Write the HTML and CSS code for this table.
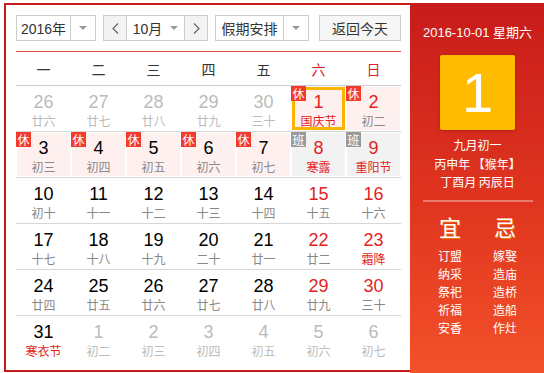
FILE: index.html
```html
<!DOCTYPE html>
<html>
<head>
<meta charset="utf-8">
<link rel="stylesheet" href="styles.css">
</head>
<body>
<div class="widget">
  <div class="main">
    <div class="controls">
      <div class="sel sel-year"><span class="sel-text">2016年</span><span class="sel-arrow"><i class="tri"></i></span></div>
      <div class="month-group">
        <span class="nav-btn"><svg width="7" height="11" viewBox="0 0 7 11"><polyline points="6,0.5 1,5.5 6,10.5" fill="none" stroke="#666" stroke-width="1.2"/></svg></span>
        <span class="month-sel">10月<i class="tri"></i></span>
        <span class="nav-btn"><svg width="7" height="11" viewBox="0 0 7 11"><polyline points="1,0.5 6,5.5 1,10.5" fill="none" stroke="#666" stroke-width="1.2"/></svg></span>
      </div>
      <div class="sel sel-holiday"><span class="sel-text">假期安排</span><span class="sel-arrow"><i class="tri"></i></span></div>
      <div class="btn-today">返回今天</div>
    </div>
    <div class="cal">
      <div class="weekdays">
        <span>一</span><span>二</span><span>三</span><span>四</span><span>五</span><span class="red">六</span><span class="red">日</span>
      </div>
      <div class="week">
        <div class="day other"><b>26</b><em>廿六</em></div>
        <div class="day other"><b>27</b><em>廿七</em></div>
        <div class="day other"><b>28</b><em>廿八</em></div>
        <div class="day other"><b>29</b><em>廿九</em></div>
        <div class="day other"><b>30</b><em>三十</em></div>
        <div class="day rest selected wknd"><span class="badge">休</span><b>1</b><em class="fest">国庆节</em></div>
        <div class="day rest wknd"><span class="badge">休</span><b>2</b><em>初二</em></div>
      </div>
      <div class="week">
        <div class="day rest"><span class="badge">休</span><b>3</b><em>初三</em></div>
        <div class="day rest"><span class="badge">休</span><b>4</b><em>初四</em></div>
        <div class="day rest"><span class="badge">休</span><b>5</b><em>初五</em></div>
        <div class="day rest"><span class="badge">休</span><b>6</b><em>初六</em></div>
        <div class="day rest"><span class="badge">休</span><b>7</b><em>初七</em></div>
        <div class="day work wknd"><span class="badge grey">班</span><b>8</b><em class="fest">寒露</em></div>
        <div class="day work wknd"><span class="badge grey">班</span><b>9</b><em class="fest">重阳节</em></div>
      </div>
      <div class="week">
        <div class="day"><b>10</b><em>初十</em></div>
        <div class="day"><b>11</b><em>十一</em></div>
        <div class="day"><b>12</b><em>十二</em></div>
        <div class="day"><b>13</b><em>十三</em></div>
        <div class="day"><b>14</b><em>十四</em></div>
        <div class="day wknd"><b>15</b><em>十五</em></div>
        <div class="day wknd"><b>16</b><em>十六</em></div>
      </div>
      <div class="week">
        <div class="day"><b>17</b><em>十七</em></div>
        <div class="day"><b>18</b><em>十八</em></div>
        <div class="day"><b>19</b><em>十九</em></div>
        <div class="day"><b>20</b><em>二十</em></div>
        <div class="day"><b>21</b><em>廿一</em></div>
        <div class="day wknd"><b>22</b><em>廿二</em></div>
        <div class="day wknd"><b>23</b><em class="fest">霜降</em></div>
      </div>
      <div class="week">
        <div class="day"><b>24</b><em>廿四</em></div>
        <div class="day"><b>25</b><em>廿五</em></div>
        <div class="day"><b>26</b><em>廿六</em></div>
        <div class="day"><b>27</b><em>廿七</em></div>
        <div class="day"><b>28</b><em>廿八</em></div>
        <div class="day wknd"><b>29</b><em>廿九</em></div>
        <div class="day wknd"><b>30</b><em>三十</em></div>
      </div>
      <div class="week">
        <div class="day"><b>31</b><em class="fest">寒衣节</em></div>
        <div class="day other"><b>1</b><em>初二</em></div>
        <div class="day other"><b>2</b><em>初三</em></div>
        <div class="day other"><b>3</b><em>初四</em></div>
        <div class="day other"><b>4</b><em>初五</em></div>
        <div class="day other"><b>5</b><em>初六</em></div>
        <div class="day other"><b>6</b><em>初七</em></div>
      </div>
    </div>
  </div>
  <div class="panel">
    <div class="p-date">2016-10-01 星期六</div>
    <div class="p-big">1</div>
    <div class="p-lunar">九月初一</div>
    <div class="p-lunar">丙申年 【猴年】</div>
    <div class="p-lunar">丁酉月 丙辰日</div>
    <div class="p-sep"></div>
    <div class="yiji">
      <div class="yj-col">
        <div class="yj-title">宜</div>
        <div class="yj-item">订盟</div>
        <div class="yj-item">纳采</div>
        <div class="yj-item">祭祀</div>
        <div class="yj-item">祈福</div>
        <div class="yj-item">安香</div>
      </div>
      <div class="yj-col">
        <div class="yj-title">忌</div>
        <div class="yj-item">嫁娶</div>
        <div class="yj-item">造庙</div>
        <div class="yj-item">造桥</div>
        <div class="yj-item">造船</div>
        <div class="yj-item">作灶</div>
      </div>
    </div>
  </div>
</div>
</body>
</html>
```
FILE: styles.css
```css
* { box-sizing: border-box; margin: 0; padding: 0; }
html, body { width: 544px; height: 373px; overflow: hidden; background: #fff; }
body {
  font-family: "Liberation Sans", "Noto Sans CJK SC", sans-serif;
  color: #333;
}
.widget {
  position: relative;
  margin: 3px 0 0 4px;
  width: 543px;
  height: 369px;
  border: 2px solid #c81b1b;
  display: flex;
  background: #fff;
}
.main {
  width: 404px;
  padding: 10px 9px 0 10px;
  flex: none;
}
.controls {
  display: flex;
  height: 26px;
  font-size: 14px;
  color: #333;
}
.sel {
  display: flex;
  height: 26px;
  border: 1px solid #ccc;
  background: #fff;
}
.sel-year { width: 80px; }
.sel-holiday { width: 94px; margin-left: 7px; }
.sel-text {
  flex: 1;
  display: flex;
  align-items: center;
  justify-content: center;
  border-right: 1px solid #ccc;
  font-family: "Noto Sans CJK SC", sans-serif;
}
.sel-year .sel-text { font-family: "Liberation Sans", "Noto Sans CJK SC", sans-serif; }
.sel-arrow {
  width: 24px;
  display: flex;
  align-items: center;
  justify-content: center;
}
.tri {
  display: inline-block;
  width: 0; height: 0;
  border-left: 4px solid transparent;
  border-right: 4px solid transparent;
  border-top: 4px solid #999;
}
.month-group {
  display: flex;
  margin-left: 7px;
  width: 105px;
  height: 26px;
  border: 1px solid #ccc;
}
.nav-btn {
  width: 22px;
  background: #f3f3f3;
  display: flex;
  align-items: center;
  justify-content: center;
}
.month-sel {
  flex: 1;
  border-left: 1px solid #ccc;
  border-right: 1px solid #ccc;
  display: flex;
  align-items: center;
  justify-content: center;
  gap: 8px;
  font-family: "Liberation Sans", "Noto Sans CJK SC", sans-serif;
}
.btn-today {
  margin-left: 10px;
  width: 82px;
  height: 26px;
  border: 1px solid #ccc;
  background: #f6f6f6;
  display: flex;
  align-items: center;
  justify-content: center;
  font-family: "Noto Sans CJK SC", sans-serif;
}
.cal {
  margin-top: 10px;
  width: 385px;
  border-top: 1px solid #e4473b;
}
.weekdays {
  display: flex;
  height: 34px;
  border-bottom: 1px solid #ccc;
  font-family: "Noto Sans CJK SC", sans-serif;
  font-size: 14px;
  color: #333;
}
.weekdays span {
  width: 55px;
  display: flex;
  align-items: center;
  justify-content: center;
}
.weekdays .red { color: #e22020; }
.week {
  display: flex;
  height: 46px;
  border-bottom: 1px solid #d6d6d6;
}
.week:last-child { border-bottom: none; }
.day {
  position: relative;
  width: 55px;
  height: 45px;
  border: 1px solid #fff;
  display: flex;
  flex-direction: column;
  align-items: center;
  padding-top: 5px;
}
.day b {
  font-weight: normal;
  font-size: 18px;
  line-height: 20px;
  color: #000;
  font-family: "Liberation Sans", sans-serif;
}
.day em {
  font-style: normal;
  font-size: 12px;
  line-height: 18px;
  color: #888;
  font-family: "Noto Sans CJK SC", sans-serif;
}
.day.wknd b { color: #e21f1f; }
.day em.fest { color: #e21f1f; }
.day.other b, .day.other em { color: #bbb; }
.day.rest { background: #fff0f0; }
.day.work { background: #f2f2f2; }
.day.selected { box-shadow: inset 0 0 0 3px #fdb400; }
.badge {
  position: absolute;
  top: -1px;
  left: -1px;
  width: 15px;
  height: 15px;
  background: #f43a2c;
  color: #fff;
  font-size: 12px;
  line-height: 15px;
  text-align: center;
  font-family: "Noto Sans CJK SC", sans-serif;
}
.badge.grey { background: #9a9a9a; }
.panel {
  width: 135px;
  flex: none;
  margin-top: -2px;
  height: 371px;
  margin-bottom: -2px;
  background: linear-gradient(to bottom, #c81b1b 0%, #e0361f 55%, #f3512a 100%);
  color: #fff;
  display: flex;
  flex-direction: column;
  align-items: center;
  padding-top: 20px;
}
.p-date {
  font-size: 13px;
  line-height: 20px;
  font-family: "Liberation Sans", "Noto Sans CJK SC", sans-serif;
}
.p-big {
  margin-top: 12px;
  width: 75px;
  height: 75px;
  background: #ffbb00;
  border-radius: 2px;
  box-shadow: 0 1px 3px rgba(120, 0, 0, 0.35);
  display: flex;
  align-items: center;
  justify-content: center;
  font-size: 56px;
  font-family: "Liberation Sans", sans-serif;
  color: #fff;
  margin-bottom: 6px;
}
.p-lunar {
  font-size: 12px;
  line-height: 18.5px;
  font-family: "Noto Sans CJK SC", sans-serif;
}
.p-sep {
  margin-top: 8px;
  width: 110px;
  height: 2px;
  background: rgba(255, 255, 255, 0.35);
}
.yiji {
  display: flex;
  width: 110px;
  margin-top: 11px;
}
.yj-col {
  width: 55px;
  display: flex;
  flex-direction: column;
  align-items: center;
  font-family: "Noto Sans CJK SC", sans-serif;
}
.yj-title {
  font-size: 22px;
  line-height: 26px;
  margin-bottom: 8px;
  text-shadow: 1px 1px 0 rgba(255, 180, 0, 0.5);
}
.yj-item {
  font-size: 12px;
  line-height: 18px;
}
```
